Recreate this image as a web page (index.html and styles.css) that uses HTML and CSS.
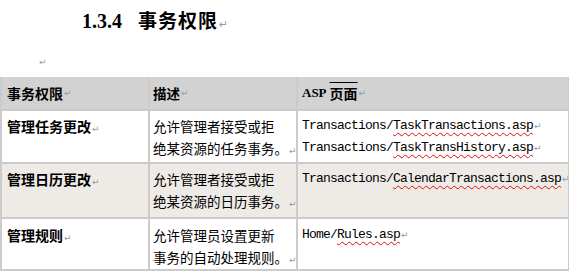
FILE: index.html
```html
<!DOCTYPE html>
<html lang="zh-CN">
<head>
<meta charset="utf-8">
<title>事务权限</title>
<link rel="stylesheet" href="styles.css">
</head>
<body>
<h1 class="title"><span class="num">1.3.4</span><span class="ttl">事务权限</span><span class="pm">↵</span></h1>
<p class="blank"><span class="pm">↵</span></p>
<div class="tbl">
  <div class="cell head"><span class="bold">事务权限</span><span class="pm">↵</span></div>
  <div class="cell head c2"><span class="bold">描述</span><span class="pm">↵</span></div>
  <div class="cell head c3"><span class="asp">ASP</span> <span class="bold over">页面</span><span class="pm">↵</span></div>

  <div class="cell"><span class="bold">管理任务更改</span><span class="pm">↵</span></div>
  <div class="cell c2">允许管理者接受或拒<br>绝某资源的任务事务。<span class="pm">↵</span></div>
  <div class="cell c3 mono">Transactions/<span class="sp">TaskTransactions.asp</span><span class="pm">↵</span><br>Transactions/<span class="sp">TaskTransHistory.asp</span><span class="pm">↵</span></div>

  <div class="cell alt"><span class="bold">管理日历更改</span><span class="pm">↵</span></div>
  <div class="cell alt c2">允许管理者接受或拒<br>绝某资源的日历事务。<span class="pm">↵</span></div>
  <div class="cell alt c3 mono">Transactions/<span class="sp">CalendarTransactions.asp</span><span class="pm">↵</span></div>

  <div class="cell last"><span class="bold">管理规则</span><span class="pm">↵</span></div>
  <div class="cell last c2">允许管理员设置更新<br>事务的自动处理规则。<span class="pm">↵</span></div>
  <div class="cell last c3 mono">Home/<span class="sp">Rules.asp</span><span class="pm">↵</span></div>
</div>
</body>
</html>
```
FILE: styles.css
```css
html, body {
  margin: 0;
  padding: 0;
  background: #ffffff;
}
body {
  width: 569px;
  height: 273px;
  overflow: hidden;
  font-family: "Noto Sans CJK SC", "Liberation Sans", sans-serif;
  color: #000;
}
.title {
  margin: 0;
  padding-left: 82px;
  height: 40px;
  line-height: 40px;
  font-size: 20px;
  font-weight: 700;
  white-space: nowrap;
}
.title .num {
  font-family: "Liberation Serif", serif;
  font-size: 20px;
  margin-right: 16px;
}
.title .ttl {
  font-family: "Noto Sans CJK SC", sans-serif;
  font-size: 19px;
  letter-spacing: 1px;
}
.title .pm {
  font-size: 11px;
}
.blank {
  margin: 0;
  height: 37px;
  line-height: 37px;
  padding-left: 38px;
}
.pm {
  font-family: "DejaVu Sans", sans-serif;
  font-size: 9px;
  font-weight: 400;
  color: #9a9a9a;
  margin-left: 1px;
  letter-spacing: 0;
}
.tbl {
  display: grid;
  grid-template-columns: 146px 146px 270px;
  grid-template-rows: 32px 51px 53px 50px;
  column-gap: 2px;
  row-gap: 2px;
  padding: 0 2px 2px 2px;
  background: #cbcbcb;
  width: max-content;
}
.cell {
  background: #ffffff;
  font-size: 14px;
  line-height: 22px;
  padding: 4px 0 0 5px;
  white-space: nowrap;
  overflow: visible;
}
.cell.head {
  background: #d2d2d2;
  padding-top: 0;
  display: flex;
  align-items: center;
}
.cell.alt {
  background: #eeebe6;
}
.cell.last {
  padding-top: 5px;
}
.c2 {
  padding-left: 3px;
  font-size: 13.5px;
}
.c3 {
  padding-left: 4px;
}
.bold {
  font-weight: 700;
}
.over {
  text-decoration: overline;
  text-decoration-thickness: 1px;
}
.asp {
  font-family: "Liberation Serif", serif;
  font-weight: 700;
  font-size: 13px;
  margin-right: 3px;
}
.mono {
  font-family: "Liberation Mono", monospace;
  font-size: 13px;
  letter-spacing: -0.8px;
}
.sp {
  text-decoration: underline wavy #e01010;
  text-decoration-thickness: 1px;
  text-underline-offset: 3px;
}
```
